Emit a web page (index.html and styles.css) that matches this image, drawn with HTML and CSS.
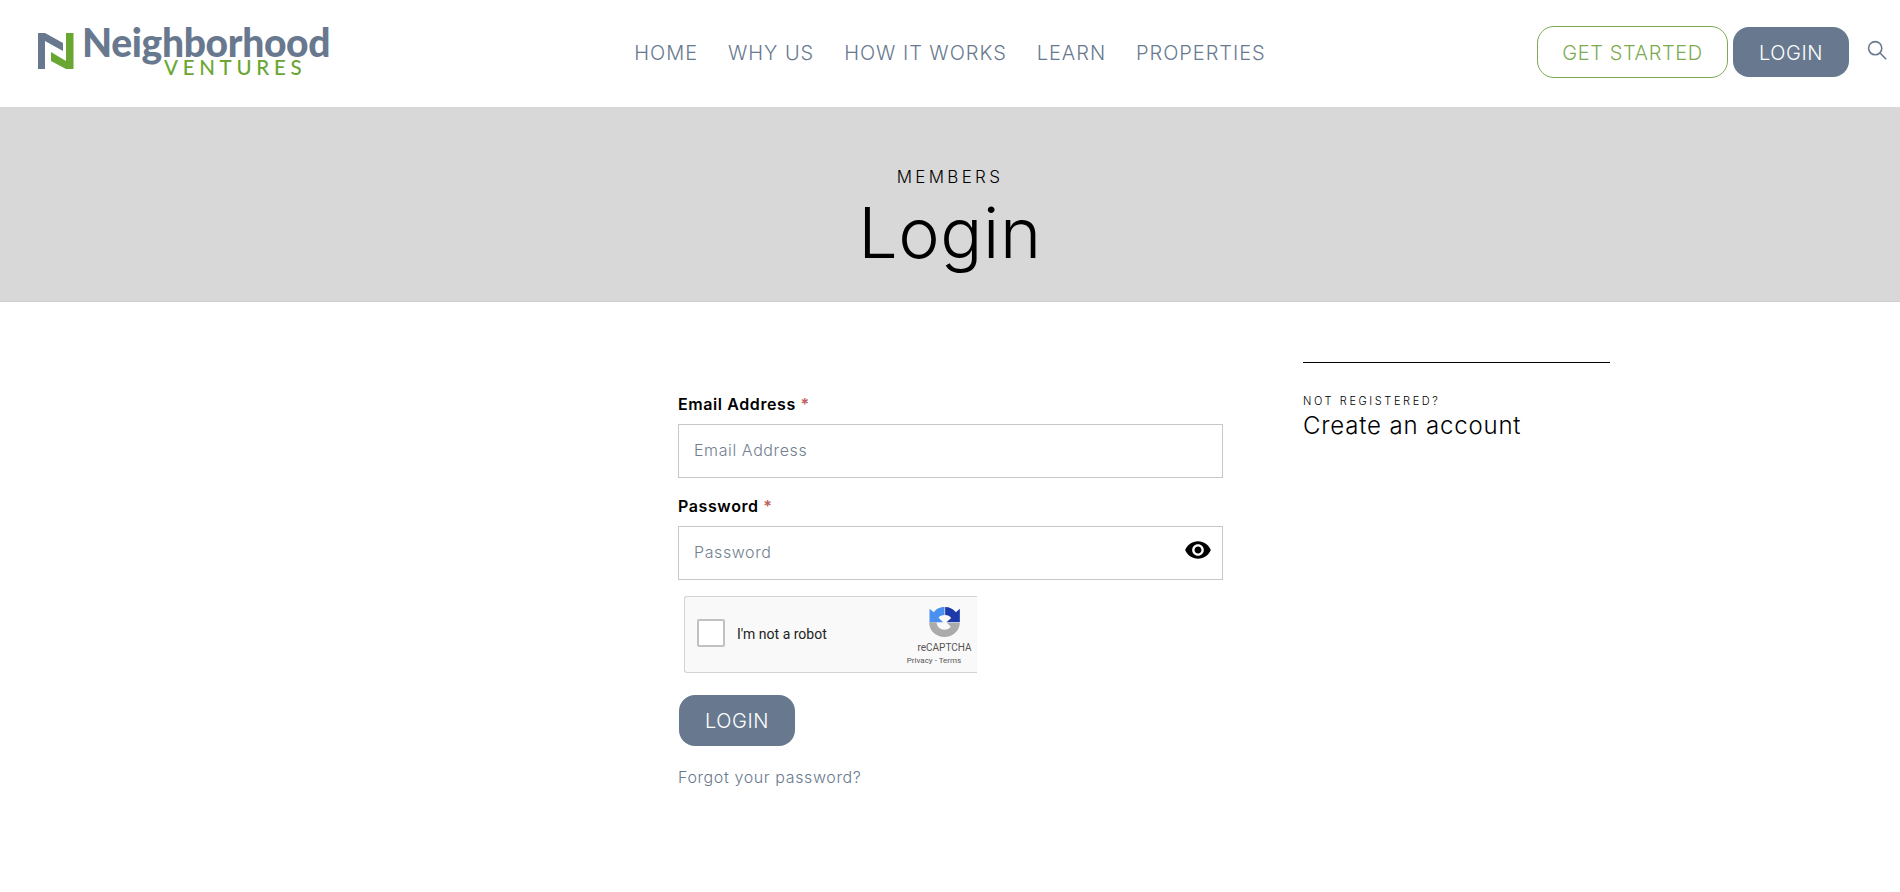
FILE: index.html
```html
<!DOCTYPE html>
<html lang="en">
<head>
    <meta charset="UTF-8">
    <meta name="viewport" content="width=device-width, initial-scale=1.0">
    <title>Login | Neighborhood Ventures</title>
    <link rel="stylesheet" href="styles.css">
</head>
<body>
    <header class="site-header">
        <a class="logo" href="#">
            <svg class="logo-mark" viewBox="0 0 36 36" width="36" height="36">
                <polygon fill="#68798f" points="0,0 7,0 25,10 25,18 7,8 7,36 0,36"/>
                <polygon fill="#6aa632" points="28,0 35.500,0 35.500,36 28,36 13,28 13,19 28,28"/>
            </svg>
            <span class="logo-text">
                <span class="logo-name">Neighborhood</span>
                <span class="logo-sub">VENTURES</span>
            </span>
        </a>
        <nav class="main-nav">
            <a href="#">HOME</a>
            <a href="#">WHY US</a>
            <a href="#">HOW IT WORKS</a>
            <a href="#">LEARN</a>
            <a href="#">PROPERTIES</a>
        </nav>
        <div class="header-actions">
            <a class="btn btn-outline" href="#">GET STARTED</a>
            <a class="btn btn-solid" href="#">LOGIN</a>
            <svg class="search-icon" viewBox="0 0 20 20" width="20" height="20" fill="none" stroke="#68798f" stroke-width="1.6">
                <circle cx="8.2" cy="8.2" r="6.6"/>
                <line x1="13" y1="13" x2="19.2" y2="19.2"/>
            </svg>
        </div>
    </header>

    <section class="hero">
        <div class="hero-kicker">MEMBERS</div>
        <h1>Login</h1>
    </section>

    <main class="content">
        <form class="login-form">
            <label for="email">Email Address <span class="req">*</span></label>
            <input id="email" type="email" placeholder="Email Address">

            <label for="password">Password <span class="req">*</span></label>
            <div class="password-wrap">
                <input id="password" type="password" placeholder="Password">
                <svg class="eye" viewBox="0 0 24 24" width="28" height="28">
                    <path fill="#000" d="M12 4.5C7 4.5 2.73 7.61 1 12c1.73 4.39 6 7.5 11 7.5s9.27-3.11 11-7.5c-1.730-4.390-6-7.500-11-7.500zM12 17c-2.760 0-5-2.240-5-5s2.240-5 5-5 5 2.240 5 5-2.240 5-5 5zm0-8c-1.660 0-3 1.340-3 3s1.340 3 3 3 3-1.340 3-3-1.340-3-3-3z"/>
                </svg>
            </div>

            <div class="captcha">
                <span class="captcha-box"></span>
                <span class="captcha-label">I'm not a robot</span>
                <div class="captcha-brand">
                    <svg viewBox="30 22 92 90" width="31" height="30">
                        <path fill="#4a90f0" d="M76 22C60 22 50 29 44 38L31 27V68H72L58 54C62 49 68 46 76 46Z"/>
                        <path fill="#1c3aa9" d="M78 22C91 22 103 28 110 38L122 27V68H82L96 55C92 50 86 46 78 46Z"/>
                        <path fill="#ababab" d="M30 68H52C53 81 62 90 76 90C84 90 90 87 95 81L84 70H122C121 95 100 112 76 112C50 112 30 94 30 68Z"/>
                    </svg>
                    <div class="captcha-name">reCAPTCHA</div>
                    <div class="captcha-links">Privacy - Terms</div>
                </div>
            </div>

            <button class="btn btn-solid btn-submit" type="button">LOGIN</button>
            <a class="forgot" href="#">Forgot your password?</a>
        </form>

        <aside class="side">
            <div class="side-kicker">NOT REGISTERED?</div>
            <a class="side-link" href="#">Create an account</a>
        </aside>
    </main>
</body>
</html>
```

FILE: styles.css
```css
* { box-sizing: border-box; }
body { margin: 0; background: #fff; color: #000; font-family: Inter, "Liberation Sans", sans-serif; }
a { color: inherit; text-decoration: none; }

.site-header { height: 107px; display: grid; grid-template-columns: 1fr auto 1fr; align-items: center; padding: 0 13px 3px; }

.logo { display: flex; align-items: flex-start; gap: 8px; height: 52px; margin: -2px 0 0 25px; }
.logo-mark { margin-top: 8px; flex: none; }
.logo-text { display: flex; flex-direction: column; }
.logo-name { font-family: Lato, sans-serif; font-weight: 900; font-size: 39px; line-height: 34px; letter-spacing: -0.35px; color: #68798f; }
.logo-sub { font-family: Lato, sans-serif; font-weight: 500; font-size: 20.5px; line-height: 16px; letter-spacing: 4.7px; color: #6aa632; margin-left: 82px; }

.main-nav { display: flex; gap: 30px; margin-top: 2px; font-size: 20px; font-weight: 300; letter-spacing: 0.95px; color: #68798f; }

.header-actions { display: flex; align-items: center; justify-content: flex-end; }
.btn { display: flex; align-items: center; justify-content: center; padding-top: 1px; font-family: inherit; font-size: 20px; font-weight: 300; letter-spacing: 0.6px; border-radius: 16px; }
.btn-outline { width: 191px; height: 52px; border: 1px solid #7dab52; border-radius: 17px; color: #7dab52; margin-right: 5px; }
.btn-solid { width: 116px; height: 50px; background: #68798f; color: #fff; border: 0; }
.search-icon { margin-left: 18px; margin-top: -4px; }

.hero { height: 195px; background: #d8d8d8; border-bottom: 1px solid #cfcfcf; text-align: center; padding-top: 60px; }
.hero-kicker { font-size: 17px; font-weight: 300; letter-spacing: 3.3px; line-height: 20px; }
.hero h1 { margin: 4px 0 0; font-size: 70px; font-weight: 300; line-height: 84px; letter-spacing: 0.6px; }

.content { display: flex; gap: 80px; padding: 60px 0 0 678px; }

.login-form { width: 545px; padding-top: 32px; display: flex; flex-direction: column; align-items: flex-start; }
.login-form label { font-size: 16px; font-weight: 600; line-height: 20px; margin-bottom: 10px; letter-spacing: 0.6px; }
.req { color: #c0605e; }
.login-form input { display: block; width: 100%; height: 54px; padding: 0 15px 3px; border: 1px solid #c8c8c8; border-radius: 0; background: #fff; font-family: inherit; font-size: 16px; font-weight: 300; letter-spacing: 0.6px; color: #68798f; margin-bottom: 18px; }
.login-form input::placeholder { color: #72808f; opacity: 1; }

.password-wrap { position: relative; width: 100%; }
.eye { position: absolute; right: 11px; top: 10px; }

.captcha { width: 293px; height: 77px; margin: -2px 0 0 6px; display: flex; align-items: center; background: #f9f9f9; border: 1px solid #d3d3d3; border-right: 0; border-radius: 3px 0 0 3px; padding-left: 12px; font-family: Roboto, sans-serif; color: #000; }
.captcha-box { width: 28px; height: 28px; background: #fff; border: 2px solid #c1c1c1; border-radius: 2px; margin-top: -3px; }
.captcha-label { font-size: 14px; margin-left: 12px; margin-top: -1px; flex: 1; color: #222; }
.captcha-brand { width: 66px; text-align: center; padding-top: 5px; }
.captcha-brand svg { display: block; margin: 0 auto 4px; }
.captcha-name { font-size: 10px; line-height: 14px; color: #555; margin-left: 1px; }
.captcha-links { font-size: 8px; line-height: 12px; color: #555; margin-left: -20px; }

.btn-submit { margin: 22px 0 0 1px; height: 51px; cursor: pointer; }
.forgot { margin-top: 21px; font-size: 16px; font-weight: 300; letter-spacing: 0.62px; color: #68798f; }

.side { width: 307px; border-top: 1px solid #000; padding-top: 29px; }
.side-kicker { font-size: 11px; font-weight: 300; letter-spacing: 2.6px; line-height: 19px; }
.side-link { display: block; font-size: 24px; font-weight: 300; line-height: 30px; letter-spacing: 0.82px; }
```
